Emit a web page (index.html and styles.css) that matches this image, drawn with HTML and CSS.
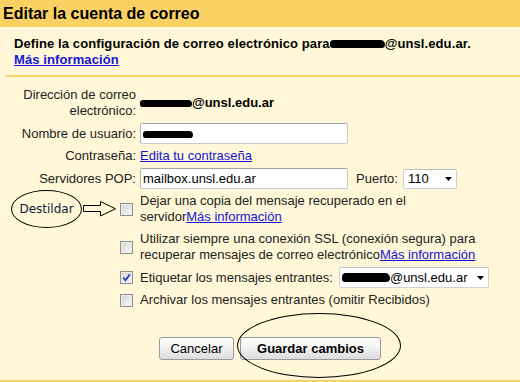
FILE: index.html
```html
<!DOCTYPE html>
<html lang="es">
<head>
    <meta charset="UTF-8">
    <title>Editar la cuenta de correo</title>
    <link rel="stylesheet" href="styles.css">
</head>
<body>
    <div class="panel">
        <h1 class="panel-title">Editar la cuenta de correo</h1>

        <div class="intro">
            <div>Define la configuración de correo electrónico para<span class="blot blot-intro"></span>@unsl.edu.ar.</div>
            <a href="#">Más información</a>
        </div>

        <div class="form">
            <div class="row">
                <div class="label">Dirección de correo<br>electrónico:</div>
                <div class="value strong"><span class="blot blot-addr"></span>@unsl.edu.ar</div>
            </div>

            <div class="row">
                <div class="label">Nombre de usuario:</div>
                <div class="field"><span class="blot blot-user"></span></div>
            </div>

            <div class="row">
                <div class="label">Contraseña:</div>
                <a class="value" href="#">Edita tu contraseña</a>
            </div>

            <div class="row">
                <div class="label">Servidores POP:</div>
                <div class="value inline">
                    <div class="field">mailbox.unsl.edu.ar</div>
                    <span class="port-label">Puerto:</span>
                    <div class="select select-port">
                        <span>110</span>
                        <svg class="caret" width="7" height="4" viewBox="0 0 7 4"><polygon points="0,0 7,0 3.5,4" fill="#000"/></svg>
                    </div>
                </div>
            </div>

            <div class="row row-first-check">
                <div class="label check-cell">
                    <span class="note">Destildar</span>
                    <svg class="arrow" width="33" height="16" viewBox="0 0 33 16">
                        <polygon points="0.5,4.5 17.5,4.5 17.5,0.5 32.5,7.8 17.5,15 17.5,10.5 0.5,10.5" fill="none" stroke="#000" stroke-width="1"/>
                    </svg>
                    <span class="checkbox"></span>
                </div>
                <div class="value">Dejar una copia del mensaje recuperado en el<br>servidor<a href="#">Más información</a></div>
            </div>

            <div class="row">
                <div class="label check-cell"><span class="checkbox"></span></div>
                <div class="value">Utilizar siempre una conexión SSL (conexión segura) para<br>recuperar mensajes de correo electrónico<a href="#">Más información</a></div>
            </div>

            <div class="row">
                <div class="label check-cell">
                    <span class="checkbox checked">
                        <svg width="11" height="11" viewBox="0 0 11 11"><path d="M2.2 5.6 L4.5 8.2 L8.8 2.4" fill="none" stroke="#2d4a9e" stroke-width="1.9"/></svg>
                    </span>
                </div>
                <div class="value inline">
                    <span>Etiquetar los mensajes entrantes:</span>
                    <div class="select select-label">
                        <span><span class="blot blot-label"></span>@unsl.edu.ar</span>
                        <svg class="caret" width="7" height="4" viewBox="0 0 7 4"><polygon points="0,0 7,0 3.5,4" fill="#000"/></svg>
                    </div>
                </div>
            </div>

            <div class="row">
                <div class="label check-cell"><span class="checkbox"></span></div>
                <div class="value">Archivar los mensajes entrantes (omitir Recibidos)</div>
            </div>

            <div class="actions">
                <button class="btn btn-cancel">Cancelar</button>
                <div class="save-wrap">
                    <button class="btn btn-save">Guardar cambios</button>
                    <span class="ring"></span>
                </div>
            </div>
        </div>
    </div>
</body>
</html>
```

FILE: styles.css
```css
:root {
    --bar: #fad163;
    --cream: #fff7d7;
    --link: #1515d8;
}

body {
    margin: 0;
    font-family: 'Liberation Sans', Arial, sans-serif;
    font-size: 13px;
    line-height: 16px;
    background-color: var(--cream);
    color: #000;
}

a {
    color: var(--link);
    text-decoration: underline;
}

.panel-title {
    margin: 0;
    height: 27px;
    line-height: 27px;
    padding-left: 3px;
    background-color: var(--bar);
    font-size: 16px;
    font-weight: bold;
}

.intro {
    margin-left: 6px;
    padding: 9px 0 7px 8px;
    border-bottom: 2px solid var(--bar);
    font-weight: bold;
    letter-spacing: 0.1px;
}

.intro a {
    display: inline-block;
}

.form {
    display: flex;
    flex-direction: column;
    gap: 4px;
    padding: 10px 0 20px;
    border-bottom: 2px solid var(--bar);
}

.row {
    display: flex;
    align-items: center;
    gap: 4px;
}

.row-first-check {
    margin-bottom: 2px;
}

.label {
    width: 136px;
    flex: none;
    text-align: right;
    color: #222;
}

.value {
    color: #222;
}

a.value {
    color: var(--link);
}

.strong {
    font-weight: bold;
    color: #000;
}

.inline {
    display: flex;
    align-items: center;
}

.blot {
    display: inline-block;
    height: 8px;
    background-color: #000;
    border-radius: 4px 5px 4px 3px;
}

.blot-intro {
    width: 55px;
}

.blot-addr {
    width: 52px;
    height: 7px;
}

.blot-user {
    width: 50px;
    height: 7px;
    margin-top: 6px;
}

.blot-label {
    width: 48px;
    height: 9px;
}

.field {
    box-sizing: border-box;
    width: 208px;
    height: 21px;
    line-height: 19px;
    padding-left: 2px;
    background-color: #fff;
    border: 1px solid #c9c9c9;
    border-top-color: #a3a3a3;
    border-left-color: #b5b5b5;
    border-radius: 2px;
    color: #000;
}

.port-label {
    margin-left: 8px;
}

.select {
    box-sizing: border-box;
    display: flex;
    align-items: center;
    justify-content: space-between;
    height: 20px;
    padding: 0 4px 0 4px;
    background-color: #fff;
    border: 1px solid #d2d2d2;
    border-top-color: #bdbdbd;
    border-radius: 2px;
    color: #000;
}

.select-port {
    width: 54px;
    margin-left: 5px;
}

.select-label {
    width: 150px;
    height: 21px;
    margin-left: 6px;
    padding-left: 2px;
}

.caret {
    display: block;
}

.check-cell {
    box-sizing: border-box;
    display: flex;
    justify-content: flex-end;
    align-items: center;
    padding-right: 3px;
}

.checkbox {
    box-sizing: border-box;
    display: flex;
    align-items: center;
    justify-content: center;
    width: 13px;
    height: 13px;
    border: 1px solid #8d8f91;
    background: linear-gradient(135deg, #d4d4d4, #f4f4f4 85%);
    box-shadow: inset 0 0 0 1px #ececec;
}

.note {
    box-sizing: border-box;
    display: flex;
    align-items: center;
    justify-content: center;
    width: 71px;
    height: 38px;
    margin: -3px 0;
    border: 1px solid #000;
    border-radius: 50%;
    font-family: 'DejaVu Sans', Verdana, sans-serif;
    font-size: 12px;
    color: #0f1c3d;
}

.arrow {
    display: block;
    margin-left: 1px;
    margin-right: 4px;
}

.actions {
    display: flex;
    gap: 6px;
    margin-top: 25px;
    padding-left: 159px;
}

.btn {
    height: 23px;
    padding: 0;
    font-family: 'Liberation Sans', Arial, sans-serif;
    font-size: 13px;
    color: #000;
    border: 1px solid #9a9a9a;
    border-radius: 3px;
    background: linear-gradient(#ffffff, #f3f3f3 45%, #dcdcdc);
}

.btn-cancel {
    width: 75px;
}

.btn-save {
    width: 141px;
    font-weight: bold;
}

.save-wrap {
    position: relative;
}

.ring {
    position: absolute;
    left: -3px;
    top: -24px;
    width: 164px;
    height: 65px;
    box-sizing: border-box;
    border: 1px solid #000;
    border-radius: 50%;
    pointer-events: none;
}
```
